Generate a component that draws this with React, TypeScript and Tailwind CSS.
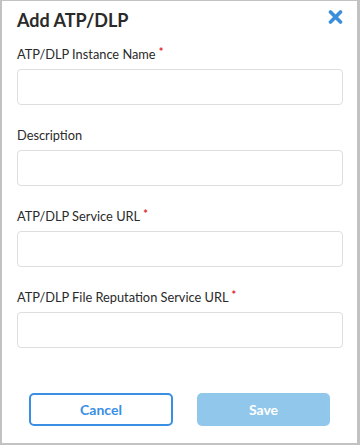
import React from "react";

function Field({ label, required }: { label: string; required?: boolean }) {
  return (
    <div className="flex flex-col">
      <div className="text-[12.8px] leading-4 text-[#2a2a2a] h-4">
        {label}
        {required && <span className="text-[#e0262b] text-[11px] font-bold align-top ml-[3px] relative top-[-2px]">*</span>}
      </div>
      <div className="mt-[7px] h-9 w-[326px] rounded-[4px] border border-[#dedede] bg-white" />
    </div>
  );
}

export default function App() {
  return (
    <div
      className="w-[360px] h-[445px] bg-white border-l-2 border-t border-r-[3px] border-b-2 border-[#c2c2c2] flex flex-col relative"
      style={{ fontFamily: "Lato, 'Open Sans', sans-serif" }}
    >
      <button className="absolute right-[14px] top-[8px] w-4 h-4 flex items-center justify-center">
        <svg width="15" height="14" viewBox="0 0 15 14">
          <path d="M2.5 2 L12.5 12 M12.5 2 L2.5 12" stroke="#3a8fdb" strokeWidth="3.6" strokeLinecap="round" />
        </svg>
      </button>
      <div className="pl-[15px] pt-[7px] text-[18px] leading-6 font-bold text-[#2a2a2a]">Add ATP/DLP</div>
      <div className="pl-[15px] pt-[14px] flex flex-col gap-[22px]">
        <Field label="ATP/DLP Instance Name" required />
        <Field label="Description" />
        <Field label="ATP/DLP Service URL" required />
        <Field label="ATP/DLP File Reputation Service URL" required />
      </div>
      <div className="flex pl-[27px] gap-[24px] mt-[45px]">
        <button className="w-[144px] h-[33px] rounded-[5px] border-2 border-[#3a8ee4] text-[#3a8ee4] text-[14px] font-bold bg-white">
          Cancel
        </button>
        <button className="w-[133px] h-[33px] rounded-[5px] bg-[#92c7ec] text-white text-[14px] font-bold">
          Save
        </button>
      </div>
    </div>
  );
}
